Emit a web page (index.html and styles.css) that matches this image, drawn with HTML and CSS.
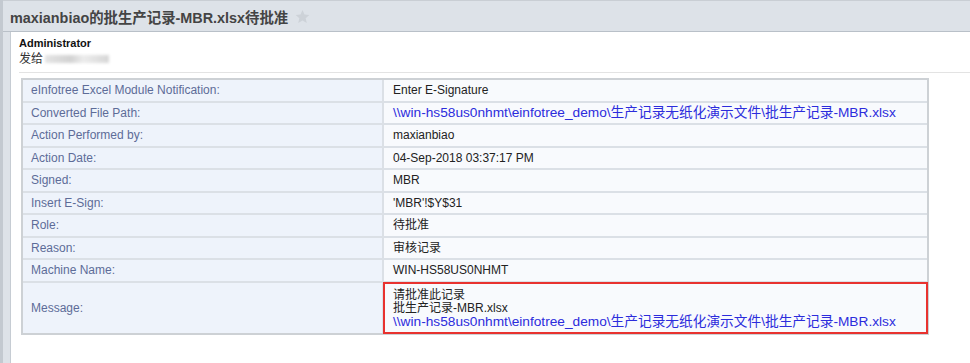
FILE: index.html
```html
<!DOCTYPE html>
<html lang="zh">
<head>
    <meta charset="UTF-8">
    <title>maxianbiao的批生产记录-MBR.xlsx待批准</title>
    <link rel="stylesheet" href="styles.css">
</head>
<body>
    <div class="frame">
        <div class="subject">
            <h1>maxianbiao的批生产记录-MBR.xlsx待批准</h1>
            <svg class="star" width="15" height="15" viewBox="0 0 24 24"><path d="M12 1.5l3.2 7.1 7.7.8-5.8 5.2 1.7 7.6L12 18.3l-6.8 3.9 1.7-7.6L1.1 9.4l7.7-.8z"/></svg>
        </div>
        <div class="mail">
            <div class="sender">Administrator</div>
            <div class="to">发给<span class="blurred"></span></div>
            <div class="divider"></div>

            <table class="notify">
                <tr>
                    <td class="label">eInfotree Excel Module Notification:</td>
                    <td class="value">Enter E-Signature</td>
                </tr>
                <tr>
                    <td class="label">Converted File Path:</td>
                    <td class="value"><a class="link" href="#">\\win-hs58us0nhmt\einfotree_demo\生产记录无纸化演示文件\批生产记录-MBR.xlsx</a></td>
                </tr>
                <tr>
                    <td class="label">Action Performed by:</td>
                    <td class="value">maxianbiao</td>
                </tr>
                <tr>
                    <td class="label">Action Date:</td>
                    <td class="value">04-Sep-2018 03:37:17 PM</td>
                </tr>
                <tr>
                    <td class="label">Signed:</td>
                    <td class="value">MBR</td>
                </tr>
                <tr>
                    <td class="label">Insert E-Sign:</td>
                    <td class="value">'MBR'!$Y$31</td>
                </tr>
                <tr>
                    <td class="label">Role:</td>
                    <td class="value">待批准</td>
                </tr>
                <tr>
                    <td class="label">Reason:</td>
                    <td class="value">审核记录</td>
                </tr>
                <tr>
                    <td class="label">Machine Name:</td>
                    <td class="value">WIN-HS58US0NHMT</td>
                </tr>
                <tr class="message">
                    <td class="label">Message:</td>
                    <td class="value highlight">请批准此记录<br>批生产记录-MBR.xlsx<br><a class="link" href="#">\\win-hs58us0nhmt\einfotree_demo\生产记录无纸化演示文件\批生产记录-MBR.xlsx</a></td>
                </tr>
            </table>
        </div>
    </div>
</body>
</html>
```

FILE: styles.css
```css
body {
    margin: 0;
    background-color: #dde2e8;
    font-family: "Liberation Sans", Arial, "Noto Sans CJK SC", sans-serif;
    color: #222;
}
.frame {
    border-left: 3px solid #c3c9d0;
    min-height: 100vh;
    box-sizing: border-box;
    display: flex;
    flex-direction: column;
}
.subject {
    height: 30px;
    border-top: 1px solid #c9ced4;
    border-bottom: 1px solid #b9c0c8;
    display: flex;
    align-items: center;
    gap: 7px;
    padding-left: 7px;
}
.subject h1 {
    margin: 0;
    font-size: 14.4px;
    font-weight: bold;
    color: #444;
}
.star {
    fill: #cdd2d8;
}
.mail {
    flex: 1;
    margin-left: 7px;
    background: #fff;
    border-left: 1px solid #c6ccd3;
    padding: 4px 0 0 8px;
}
.sender {
    font-size: 11px;
    font-weight: bold;
    line-height: 14px;
    color: #111;
}
.to {
    margin-top: 2px;
    font-size: 12px;
    line-height: 14px;
    color: #333;
    display: flex;
    align-items: center;
}
.blurred {
    display: inline-block;
    width: 64px;
    height: 8px;
    margin-left: 2px;
    background: linear-gradient(90deg, #e4e4e4, #d2d2d2 40%, #ececec 60%, #d6d6d6);
    filter: blur(1.5px);
}
.divider {
    margin-top: 6px;
    height: 1px;
    background: #e3e3e3;
}
.notify {
    margin: 5px 0 0 2px;
    width: 908px;
    table-layout: fixed;
    border-collapse: separate;
    border-spacing: 0;
    border: 2px solid #cdd1d5;
    font-size: 12px;
    line-height: 14px;
}
.notify td {
    padding: 3px 0 3.5px;
    border-bottom: 2px solid #dbe0e6;
    vertical-align: middle;
}
.notify tr:last-child td {
    border-bottom: none;
}
.notify .label {
    width: 351px;
    padding-left: 8px;
    border-right: 2px solid #dbe0e6;
    background: #eef3fb;
    color: #5d6c98;
}
.notify .value {
    padding-left: 9px;
    background: #f8fafd;
    color: #222;
}
.link {
    color: #2c2cdc;
    text-decoration: none;
    font-size: 13.7px;
}
.message td {
    line-height: 13px;
    padding-top: 6px;
    padding-bottom: 4.5px;
}
.highlight {
    outline: 2px solid #e8322f;
    outline-offset: -1px;
}
```
